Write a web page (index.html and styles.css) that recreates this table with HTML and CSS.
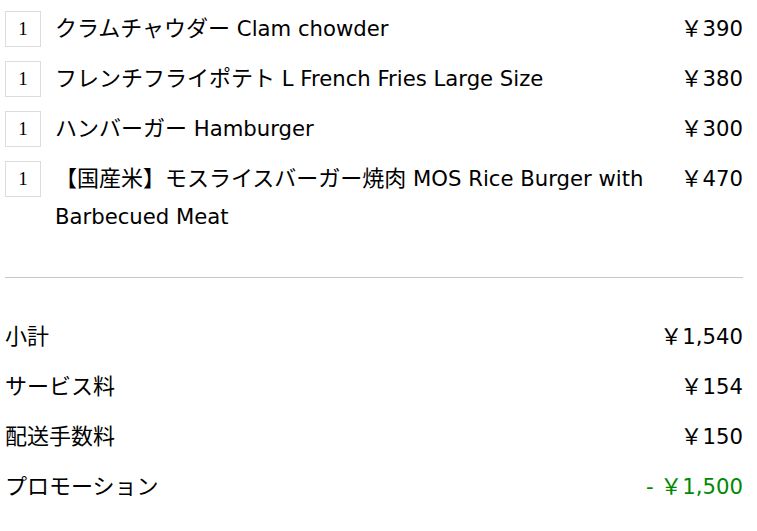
FILE: index.html
```html
<!DOCTYPE html>
<html lang="ja">
<head>
<meta charset="utf-8">
<title>Order</title>
<link rel="stylesheet" href="styles.css">
</head>
<body>
<div class="order">
  <ul class="items">
    <li class="item">
      <span class="qty">1</span>
      <span class="name"><span class="ja">クラムチャウダー</span> Clam chowder</span>
      <span class="price"><span class="ja">￥</span>390</span>
    </li>
    <li class="item">
      <span class="qty">1</span>
      <span class="name"><span class="ja">フレンチフライポテト</span> L French Fries Large Size</span>
      <span class="price"><span class="ja">￥</span>380</span>
    </li>
    <li class="item">
      <span class="qty">1</span>
      <span class="name"><span class="ja">ハンバーガー</span> Hamburger</span>
      <span class="price"><span class="ja">￥</span>300</span>
    </li>
    <li class="item">
      <span class="qty">1</span>
      <span class="name"><span class="ja">【国産米】モスライスバーガー焼肉</span> MOS Rice Burger with Barbecued Meat</span>
      <span class="price"><span class="ja">￥</span>470</span>
    </li>
  </ul>
  <hr class="divider">
  <dl class="summary">
    <div class="sum-row"><dt><span class="ja">小計</span></dt><dd><span class="ja">￥</span>1,540</dd></div>
    <div class="sum-row"><dt><span class="ja">サービス料</span></dt><dd><span class="ja">￥</span>154</dd></div>
    <div class="sum-row"><dt><span class="ja">配送手数料</span></dt><dd><span class="ja">￥</span>150</dd></div>
    <div class="sum-row"><dt><span class="ja">プロモーション</span></dt><dd class="discount">- <span class="ja">￥</span>1,500</dd></div>
  </dl>
</div>
</body>
</html>
```
FILE: styles.css
```css
html, body {
  margin: 0;
  padding: 0;
  background: #fff;
}
body {
  font-family: "DejaVu Sans", "Noto Sans CJK JP", sans-serif;
  font-size: 21.2px;
  color: #000;
}
.order {
  padding: 10px 14px 0 5px;
}
.ja {
  font-family: "Noto Sans CJK JP", sans-serif;
  font-size: 22px;
  line-height: 1;
}
.items {
  list-style: none;
  margin: 0;
  padding: 0;
  display: flex;
  flex-direction: column;
  gap: 12px;
}
.item {
  display: flex;
  align-items: flex-start;
  line-height: 38px;
}
.qty {
  flex: none;
  box-sizing: border-box;
  width: 36px;
  height: 36px;
  margin-top: 1px;
  border: 1px solid #dcdcdc;
  font-family: "Liberation Serif", serif;
  font-size: 19px;
  line-height: 34px;
  text-align: center;
  color: #000;
}
.name {
  flex: 1;
  margin-left: 14px;
  padding-right: 20px;
}
.price {
  flex: none;
  text-align: right;
}
.divider {
  border: none;
  border-top: 1px solid #c8c8c8;
  margin: 41px 0 40px;
  height: 0;
}
.summary {
  margin: 0;
  display: flex;
  flex-direction: column;
  gap: 12px;
}
.sum-row {
  display: flex;
  justify-content: space-between;
  line-height: 38px;
}
.summary dt, .summary dd {
  margin: 0;
}
.discount {
  color: #008a00;
}
```
